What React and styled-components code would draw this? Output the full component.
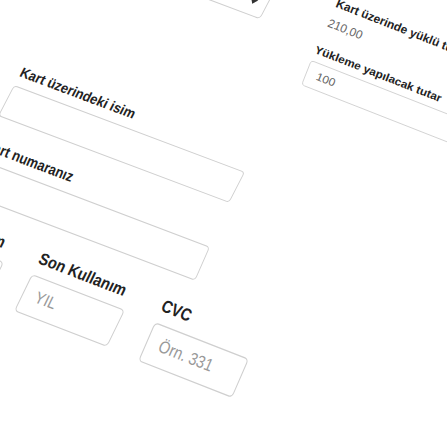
import React from 'react';
import styled, { createGlobalStyle } from 'styled-components';

const GlobalStyle = createGlobalStyle`
  html, body {
    margin: 0;
    height: 100%;
    background: #fff;
    overflow: hidden;
  }
`;

// The form was shot at an angle, and the angle differs per part: each part has its own
// axes. at = where the part's input corner lands, x/y = what one form pixel becomes.
const LABEL_H = 25;

function place(left, top, at, x, y, labelH = LABEL_H) {
  const ex = at[0] - labelH * y[0];
  const ey = at[1] - labelH * y[1];
  return `matrix(${x[0]},${x[1]},${y[0]},${y[1]},${ex - left},${ey - top})`;
}

const Sheet = styled.div`
  position: absolute;
  top: 0;
  left: 0;
  width: 680px;
  display: flex;
  align-items: flex-start;
  padding-left: 40px;
  box-sizing: border-box;
  font-family: 'Liberation Sans', Arial, sans-serif;
  font-size: 14px;
  color: #222;
`;

const LeftColumn = styled.div`
  width: 270px;
  flex: none;
  padding-top: 31px;
`;

const RightColumn = styled.div`
  width: 250px;
  flex: none;
  margin-left: 25px;
`;

const SelectBox = styled.div`
  position: relative;
  width: 209px;
  height: 34px;
  margin-bottom: 125px;
  border: 1.5px solid #cfcfcf;
  border-radius: 4px;
  box-sizing: border-box;
  transform-origin: 0 0;
  transform: ${props => props.$tilt};

  &::after {
    content: '';
    position: absolute;
    right: 10px;
    top: 17px;
    border-left: 4px solid transparent;
    border-right: 4px solid transparent;
    border-top: 5px solid #333;
  }
`;

const Field = styled.div`
  margin-bottom: 15px;
  transform-origin: 0 0;
  transform: ${props => props.$tilt};
`;

const Label = styled.label`
  display: block;
  height: 25px;
  line-height: 20px;
  font-weight: 700;
  white-space: nowrap;
`;

const Input = styled.div`
  height: 34px;
  padding: 0 12px;
  line-height: 31px;
  border: 1.5px solid #cfcfcf;
  border-radius: 4px;
  box-sizing: border-box;
  color: ${props => (props.$placeholder ? '#999' : '#666')};
`;

const Balance = styled.div`
  height: 50px;
  margin-bottom: 5px;
  transform-origin: 0 0;
  transform: ${props => props.$tilt};
`;

const StaticValue = styled.div`
  height: 25px;
  line-height: 20px;
  color: #666;
`;

const ExpiryRow = styled.div`
  display: grid;
  grid-template-columns: repeat(3, 97px);
  column-gap: 24px;
  margin-left: -36px;
`;

export default function App() {
  return (
    <>
      <GlobalStyle />
      <Sheet>
        <LeftColumn>
          <SelectBox $tilt={place(40, 31, [93, -82], [0.88, 0.33], [-0.5, 0.95], 0)} />
          <Field $tilt={place(40, 190, [14, 85], [0.856, 0.322], [-0.47, 0.91])}>
            <Label>Kart üzerindeki isim</Label>
            <Input />
          </Field>
          <Field $tilt={place(40, 264, [-21, 159], [0.856, 0.325], [-0.44, 1])}>
            <Label>Kart numaranız</Label>
            <Input />
          </Field>
          <ExpiryRow>
            <Field $tilt={place(4, 338, [-89, 226], [0.96, 0.37], [-0.53, 1.09])}>
              <Label>Son Kullanım</Label>
              <Input $placeholder>AY</Input>
            </Field>
            <Field $tilt={place(125, 338, [32, 274], [0.96, 0.37], [-0.53, 1.09])}>
              <Label>Son Kullanım</Label>
              <Input $placeholder>YIL</Input>
            </Field>
            <Field $tilt={place(246, 338, [155, 322], [0.97, 0.38], [-0.5, 1.15])}>
              <Label>CVC</Label>
              <Input $placeholder>Örn. 331</Input>
            </Field>
          </ExpiryRow>
        </LeftColumn>
        <RightColumn>
          <Balance $tilt={place(335, 0, [340, -5], [0.79, 0.31], [-0.33, 0.78], 0)}>
            <Label>Kart üzerinde yüklü tutar</Label>
            <StaticValue>210,00</StaticValue>
          </Balance>
          <Field $tilt={place(335, 55, [311, 60], [0.79, 0.31], [-0.29, 0.735])}>
            <Label>Yükleme yapılacak tutar</Label>
            <Input>100</Input>
          </Field>
        </RightColumn>
      </Sheet>
    </>
  );
}
